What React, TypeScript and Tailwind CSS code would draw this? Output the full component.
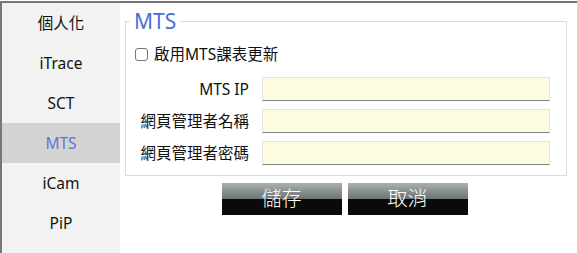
import React from "react";

const items = ["個人化", "iTrace", "SCT", "MTS", "iCam", "PiP"];

export default function App() {
  return (
    <div className="w-[577px] h-[253px] bg-white pt-px font-['Noto_Sans','Noto_Sans_CJK_TC',sans-serif] text-[#111]">
      <div className="flex h-[252px] border-t-2 border-l-2 border-[#777]">
        <div className="w-[118px] bg-[#f2f2f2] flex flex-col">
          {items.map((it) => (
            <div
              key={it}
              className={
                "h-10 flex items-center justify-center text-[15.5px] leading-5 " +
                (it === "MTS" ? "bg-[#d3d3d3] text-[#5a77d6]" : "text-[#111]")
              }
            >
              {it}
            </div>
          ))}
        </div>
        <div className="w-[442px] ml-[5px] flex flex-col">
          <fieldset className="mt-[6px] border border-[#dcdcdc] pl-[9px] pr-[16px] pb-[10px]">
            <legend className="ml-[-5px] px-1 text-[21px] leading-6 text-[#4a6fd6]">MTS</legend>
            <div className="mt-[11px] h-5 flex items-center gap-[6px] text-[15.5px] leading-5">
              <span className="w-[13px] h-[13px] border border-[#767676] rounded-[3px] bg-white"></span>
              <span>啟用MTS課表更新</span>
            </div>
            <div className="mt-[13px] flex flex-col gap-2">
              {["MTS IP", "網頁管理者名稱", "網頁管理者密碼"].map((l) => (
                <div key={l} className="flex items-center h-6">
                  <div className="w-[114px] text-right text-[15.5px] leading-5">{l}</div>
                  <div className="ml-[13px] flex-1 h-6 bg-[#fffde1] border border-[#e2e2e2] border-b-[#7f7f7f]"></div>
                </div>
              ))}
            </div>
          </fieldset>
          <div className="mt-[7px] flex justify-center gap-[6px] pr-[3px]">
            {["儲存", "取消"].map((b) => (
              <div
                key={b}
                className="w-[120px] h-8 flex items-center justify-center text-white text-[20px] leading-8 font-light bg-[linear-gradient(to_bottom,#aab1b1_0%,#6c7272_50%,#0a0a0a_50%,#0a0a0a_100%)]"
              >
                {b}
              </div>
            ))}
          </div>
        </div>
      </div>
    </div>
  );
}
